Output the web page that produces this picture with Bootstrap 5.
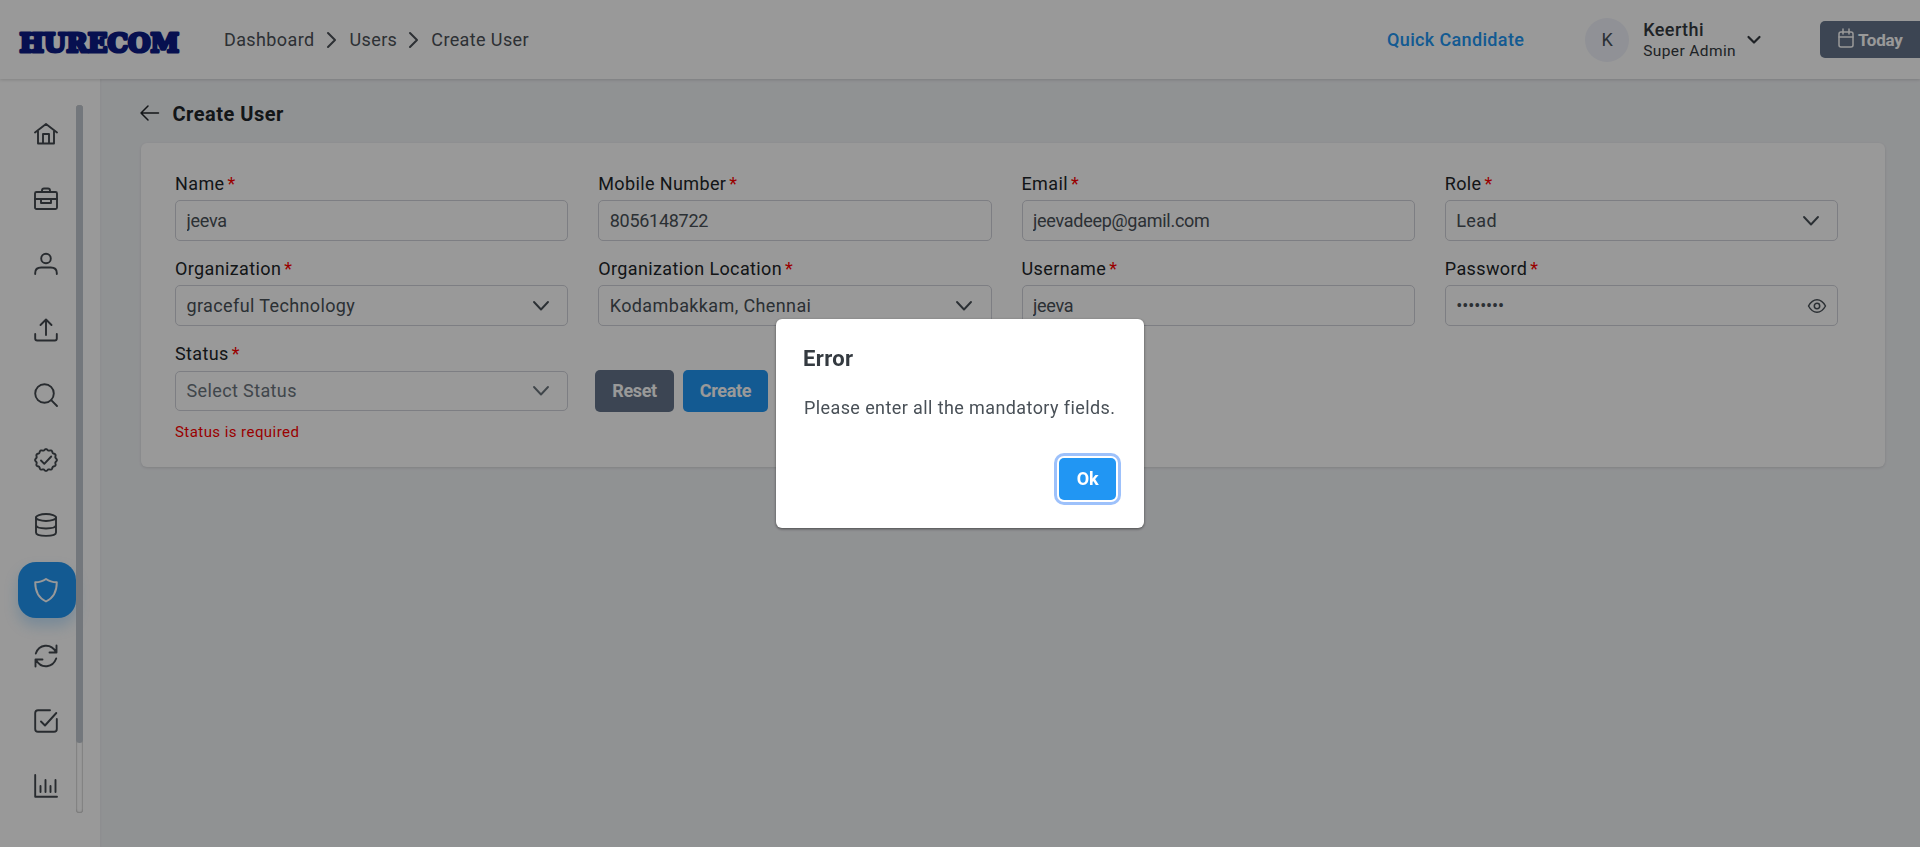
<!DOCTYPE html>
<html lang="en">
<head>
<meta charset="utf-8">
<meta name="viewport" content="width=device-width, initial-scale=1">
<title>Create User</title>
<link href="https://cdn.jsdelivr.net/npm/bootstrap@5.3.0/dist/css/bootstrap.min.css" rel="stylesheet">
<style>
body{font-family:Roboto,"Liberation Sans",sans-serif;font-size:18px;letter-spacing:.38px;color:#495057;background:#f1f3f6;height:847px;overflow:hidden;line-height:1.2}
svg{display:block;flex:none;overflow:visible}
.ico{fill:none;stroke:currentColor;stroke-width:1.5;stroke-linecap:round;stroke-linejoin:round}
.topbar{height:79px;padding-left:18px;box-shadow:0 1px 3px rgba(0,0,0,.15);position:relative}
.crumbs{margin-left:44px;color:#4b5157}
.quick{color:#2196f3;font-weight:500;letter-spacing:.35px}
.avatar{width:44px;height:44px;background:#f0f2fa;letter-spacing:0}
.who{color:#343a40}
.who strong{font-weight:500;line-height:21px;letter-spacing:.4px}
.who span{font-size:15.5px;line-height:21px;padding-top:1px}
.btn{--bs-btn-font-weight:700;--bs-btn-border-radius:5px;--bs-btn-color:#fff;--bs-btn-border-width:0;--bs-btn-font-size:18px;letter-spacing:-.35px;height:42px;padding:0 17px;line-height:40px}
.btn-slate{background:#64748b;color:#fff}
.btn-blue{background:#2196f3;color:#fff}
.today{width:120px;height:37px;margin-right:-20px;padding:0 0 0 18px;font-size:17px;letter-spacing:-.25px}
.side{width:100px;padding:26px 0 0 18px;box-shadow:1px 0 2px rgba(0,0,0,.04)}
.menu-list{width:58px;padding-top:1px}
.menu-list a{height:56px;margin-bottom:9.2px;padding-right:2px;border-radius:18px;color:#43494f}
.menu-list .ico{stroke-width:1.900}
.menu-list a.active{background:#2196f3;color:#fff;box-shadow:0 8px 14px rgba(33,150,243,.25)}
.track{width:7px;height:708px;border-radius:4px;box-shadow:inset 0 0 2px rgba(0,0,0,.55)}
.thumb{height:638px;border-radius:4px;background:#c0c7cf}
.page-title{margin:0;font-size:20px;font-weight:700;color:#212529;letter-spacing:.5px}
.panel{margin:17px 35px 0 40.5px;height:324px;border:0;border-radius:6px;padding:28px 47px 0 34.5px;box-shadow:0 1px 3px rgba(0,0,0,.12)}
.fields{--bs-gutter-x:30px;--bs-gutter-y:0}
.fields>div{height:85px}
.form-label{color:#212529;margin:0 0 5px;padding-top:1px;height:24px;line-height:23px;display:block}
.form-label i{color:#f00;font-style:normal;margin-left:3px}
.box{height:41px;border:1px solid #d0d2da;border-radius:5px;padding:0 10.5px;color:#495057;font-size:18px}
input.box{letter-spacing:-.28px}
.err{color:#f00;font-size:15px;letter-spacing:.44px;margin-top:12px}
.shade{background:rgba(0,0,0,.4);z-index:5}
.modal-box{width:368px;height:209px;border-radius:6px;border:0;padding:27px 27px 28px;box-shadow:0 1px 3px rgba(0,0,0,.5)}
.modal-box h2{font-size:22px;font-weight:700;color:#343a40;margin:0;line-height:25px}
.ok{width:57px;margin-right:1px;box-shadow:0 0 0 2px #fff,0 0 0 5px #9dc1fb}
</style>
</head>
<body>
<header class="topbar d-flex align-items-center bg-white">
  <svg width="162" height="28" viewBox="0 0 162 28"><text x="1.500" y="26" font-family="DejaVu Serif" font-weight="700" font-size="26.500" letter-spacing="0" textLength="159.500" lengthAdjust="spacingAndGlyphs" fill="#0c1b85" stroke="#0c1b85" stroke-width="3.200" stroke-linejoin="round">HURECOM</text></svg>
  <nav class="crumbs d-flex align-items-center">
    <span>Dashboard</span>
    <svg class="ico" style="margin:0 11px 0 12px" width="12" height="18" viewBox="0 0 12 18"><path d="M2 2l7 7-7 7" stroke-width="2"/></svg>
    <span>Users</span>
    <svg class="ico" style="margin:0 11px" width="12" height="18" viewBox="0 0 12 18"><path d="M2 2l7 7-7 7" stroke-width="2"/></svg>
    <span>Create User</span>
  </nav>
  <div class="ms-auto d-flex align-items-center">
    <a class="quick text-decoration-none">Quick Candidate</a>
    <div class="avatar rounded-circle d-flex align-items-center justify-content-center" style="margin-left:61px">K</div>
    <div class="who d-flex flex-column" style="margin-left:14px;padding-top:1px"><strong>Keerthi</strong><span>Super Admin</span></div>
    <svg class="ico who" style="margin-left:11px" width="14" height="10" viewBox="0 0 14 10"><path d="M1.500 2l5.500 5.500 5.500-5.500" stroke-width="2.200"/></svg>
    <button class="btn btn-slate today d-flex align-items-center" style="margin-left:59px"><svg class="ico" style="margin:-3px 4px 0 0" width="16" height="20" viewBox="0 0 16 20"><rect x="1" y="4" width="14" height="15" rx="2"/><path d="M1 9h14M5 1v5M11 1v5"/></svg>Today</button>
  </div>
</header>
<div class="d-flex" style="height:768px">
  <aside class="side flex-shrink-0 bg-white d-flex">
    <nav class="menu-list d-flex flex-column flex-shrink-0" id="menu"></nav>
    <div class="track"><div class="thumb"></div></div>
  </aside>
  <main class="flex-grow-1">
    <div class="d-flex align-items-center" style="padding:22px 0 0 39.5px;height:47px">
      <svg class="ico text-dark" style="margin:-2px 13px 0 0" width="20" height="16" viewBox="0 0 20 16"><path d="M8 1L1 8l7 7M1 8h17.500"/></svg>
      <h1 class="page-title">Create User</h1>
    </div>
    <section class="card panel">
      <div class="row fields">
        <div class="col-3"><label class="form-label">Name<i>*</i></label><input class="form-control box" value="jeeva"></div>
        <div class="col-3"><label class="form-label">Mobile Number<i>*</i></label><input class="form-control box" value="8056148722"></div>
        <div class="col-3"><label class="form-label">Email<i>*</i></label><input class="form-control box" value="jeevadeep@gamil.com"></div>
        <div class="col-3"><label class="form-label">Role<i>*</i></label><div class="box dd d-flex align-items-center justify-content-between">Lead</div></div>
        <div class="col-3"><label class="form-label">Organization<i>*</i></label><div class="box dd d-flex align-items-center justify-content-between">graceful Technology</div></div>
        <div class="col-3"><label class="form-label">Organization Location<i>*</i></label><div class="box dd d-flex align-items-center justify-content-between">Kodambakkam, Chennai</div></div>
        <div class="col-3"><label class="form-label">Username<i>*</i></label><input class="form-control box" value="jeeva"></div>
        <div class="col-3"><label class="form-label">Password<i>*</i></label><div class="box d-flex align-items-center justify-content-between"><span style="letter-spacing:-.1px">••••••••</span><svg class="ico" width="20" height="16" viewBox="0 0 20 16"><path d="M1.500 8C4 3.500 6.500 1.700 10 1.700S16 3.500 18.500 8C16 12.500 13.500 14.300 10 14.300S4 12.500 1.500 8z"/><circle cx="10" cy="8" r="2.700"/></svg></div></div>
        <div class="col-3"><label class="form-label">Status<i>*</i></label><div class="box dd d-flex align-items-center justify-content-between" style="color:#6c757d;height:40px;margin-top:6px">Select Status</div><div class="err">Status is required</div></div>
        <div class="col-3 d-flex" style="padding:29px 0 0 12px;gap:9px"><button class="btn btn-slate">Reset</button><button class="btn btn-blue">Create</button></div>
      </div>
    </section>
  </main>
</div>
<div class="shade position-fixed top-0 start-0 w-100 h-100 d-flex align-items-center justify-content-center">
  <div class="modal-box bg-white d-flex flex-column" role="dialog">
    <h2>Error</h2>
    <p class="text-nowrap" style="margin:26px 0 0 1px;line-height:22px;letter-spacing:.4px">Please enter all the mandatory fields.</p>
    <button class="btn btn-blue ok align-self-end mt-auto">Ok</button>
  </div>
</div>
<script>
const star=()=>{let p='';for(let i=0;i<=144;i++){const a=i/144*2*Math.PI,r=10.300+.6*Math.cos(12*a);p+=(i?'L':'M')+(12+r*Math.sin(a)).toFixed(2)+' '+(12-r*Math.cos(a)).toFixed(2);}return p+'z';};
const icons=[
'<path d="M1 10.500L12 2l11 8.500M4 9v12.500h16V9M9 21.500V12h6v9.500"/>',
'<rect x="1" y="5" width="22" height="17" rx="1.500"/><path d="M8 5V3.500Q8 1.500 10 1.500h4q2 0 2 2V5M1 12h22M7 12v4h10v-4"/>',
'<circle cx="12" cy="6.500" r="4.800"/><path d="M1.200 22v-1q0-5.500 6-5.500h9.600q6 0 6 5.500v1"/>',
'<path d="M12 17V1.500M6.500 7L12 1.500 17.500 7M1.200 16v4.500q0 2 2 2h17.600q2 0 2-2V16"/>',
'<circle cx="10.500" cy="10.500" r="9.300"/><path d="M17.200 17.200L23 23"/>',
'<path d="'+star()+'"/><path d="M7 12.500l3.300 3.300L17.200 8.500"/>',
'<ellipse cx="12" cy="4.500" rx="10" ry="3.500"/><path d="M2 4.500v15C2 24 22 24 22 19.500v-15M2 12c0 4.600 20 4.600 20 0"/>',
'<path d="M12 1C8.500 3.600 5 4.300 1.200 4.300 1.200 13.500 4.500 20 12 23.500 19.500 20 22.800 13.500 22.800 4.300 19 4.300 15.500 3.600 12 1z"/>',
'<path d="M1.800 9.500C5 .5 16.500-1.500 22 8M22.500 1.500V8.500H15.500M22.200 14.500C19 23.500 7.500 25.500 2 16M1.500 22.500V15.500H8.500"/>',
'<path d="M16 1.200H4q-2.800 0-2.800 2.800v16q0 2.800 2.800 2.800h16q2.800 0 2.800-2.800v-10M7 12.500l4 4L22.300 4"/>',
'<path d="M1.200 1v21.800H23M6.500 18v-6M11.500 18V6M16.500 18v-6M21.500 18V6"/>'];
document.getElementById('menu').innerHTML=icons.map((p,i)=>`<a class="d-flex flex-shrink-0 align-items-center justify-content-center${i==7?' active':''}"><svg class="ico" width="24" height="24" viewBox="0 0 24 24">${p}</svg></a>`).join('');
document.querySelectorAll('.dd').forEach(d=>d.insertAdjacentHTML('beforeend','<svg class="ico" style="margin-right:8px" width="16" height="10" viewBox="0 0 16 10"><path d="M1 1l7 7.500L15 1" stroke-width="1.900"/></svg>'));
</script>
<script src="https://cdn.jsdelivr.net/npm/bootstrap@5.3.0/dist/js/bootstrap.bundle.min.js"></script>
</body>
</html>
